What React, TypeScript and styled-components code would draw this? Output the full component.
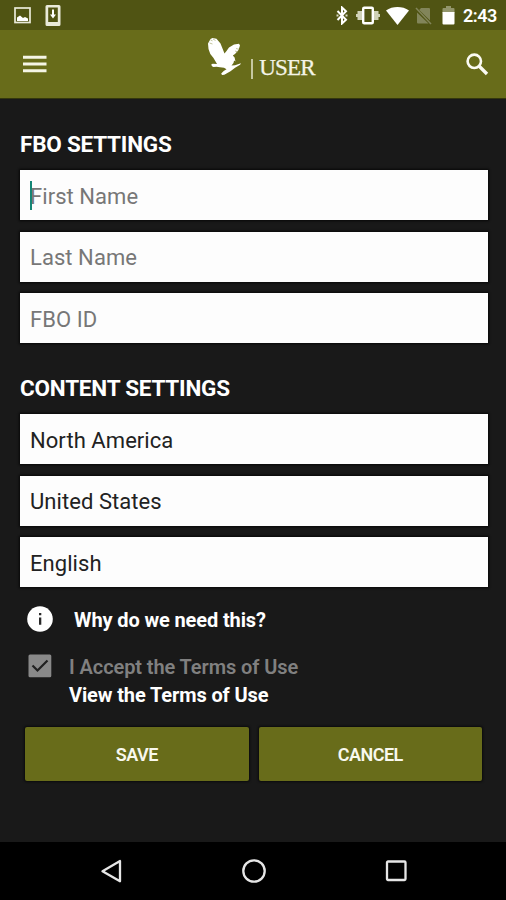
import React from "react";
import styled, { createGlobalStyle } from "styled-components";

const GlobalStyle = createGlobalStyle`
  * { box-sizing: border-box; }
  body { margin: 0; background: #191919; }
`;

const Screen = styled.div`
  width: 506px;
  height: 900px;
  display: flex;
  flex-direction: column;
  overflow: hidden;
  background: #191919;
  color: #fff;
  font-family: Roboto, sans-serif;
`;

const StatusBar = styled.div`
  height: 30px;
  flex: none;
  display: flex;
  justify-content: space-between;
  align-items: center;
  padding: 1px 9px 0 14px;
  background: #505413;
`;

const StatusGroup = styled.div<{ $gap: number }>`
  display: flex;
  align-items: center;
  gap: ${(p) => p.$gap}px;
  svg { display: block; }
`;

const Clock = styled.span`
  width: 34px;
  font-size: 18px;
  font-weight: 600;
  line-height: 28px;
  letter-spacing: -0.5px;
  margin-left: 2px;
`;

const AppBar = styled.header`
  height: 69px;
  flex: none;
  display: flex;
  align-items: flex-start;
  justify-content: space-between;
  padding: 0 17px 0 23px;
  background: #686c1a;
  border-bottom: 1px solid #34370d;
`;

const IconButton = styled.button<{ $top: number }>`
  display: block;
  margin: ${(p) => p.$top}px 0 0;
  padding: 0;
  border: 0;
  background: none;
  svg { display: block; }
`;

const Brand = styled.div`
  display: flex;
  align-items: flex-start;
  padding: 6px 0 0 10px;
  svg { display: block; }
`;

const BrandName = styled.span`
  display: flex;
  align-items: center;
  gap: 6px;
  margin: 19px 0 0 7px;
  color: #f4f4e8;
  font: 23px/26px "Liberation Serif", serif;
  letter-spacing: -0.85px;
  -webkit-text-stroke: 0.25px #f4f4e8;
`;

const Divider = styled.span`
  width: 2px;
  height: 20px;
  margin-top: 2px;
  background: #c6c8a0;
`;

const Content = styled.main`
  flex: 1;
  padding: 32px 18px 0 20px;
`;

const SectionTitle = styled.h2<{ $top?: number }>`
  margin: ${(p) => p.$top ?? 0}px 0 12px;
  font-size: 22.5px;
  font-weight: 700;
  line-height: 27px;
  letter-spacing: -0.22px;
`;

const FieldStack = styled.div`
  display: grid;
  grid-auto-rows: 50px;
  gap: 11.5px;
`;

const Field = styled.div<{ $hint?: boolean }>`
  display: flex;
  align-items: center;
  position: relative;
  padding: 2px 10px 0;
  background: #fdfdfd;
  box-shadow: 0 0 2px 1px #080808;
  color: ${(p) => (p.$hint ? "#777" : "#222")};
  font-size: 22px;
  letter-spacing: 0.06px;
`;

const Caret = styled.span`
  position: absolute;
  left: 10px;
  top: 11px;
  width: 2px;
  height: 29px;
  background: #148675;
`;

const InfoRow = styled.div`
  display: flex;
  align-items: center;
  gap: 20px;
  height: 28px;
  margin-top: 19px;
  padding-left: 6px;
  svg { display: block; }
`;

const TermsRow = styled.div`
  display: flex;
  align-items: flex-start;
  gap: 17px;
  margin-top: 19px;
  padding-left: 8px;
  svg { display: block; margin-top: 1px; }
`;

const TermsText = styled.div`
  display: flex;
  flex-direction: column;
`;

const Label = styled.span<{ $muted?: boolean }>`
  color: ${(p) => (p.$muted ? "#808080" : "#fff")};
  font-size: 20px;
  font-weight: ${(p) => (p.$muted ? 600 : 700)};
  line-height: 28px;
  letter-spacing: ${(p) => (p.$muted ? -0.09 : -0.12)}px;
  white-space: nowrap;
`;

const Actions = styled.div`
  display: grid;
  grid-template-columns: 1fr 1fr;
  gap: 10px;
  margin-top: 18px;
  padding: 0 6px 0 5px;
`;

const ActionButton = styled.button`
  height: 54px;
  padding: 1px 0 0;
  border: 0;
  border-radius: 2px;
  background: #686c1a;
  box-shadow: 0 0 2px 1px #0b0b0d;
  color: #f8f8ee;
  font: 600 18px/22px Roboto, sans-serif;
  letter-spacing: -0.5px;
`;

const NavBar = styled.nav`
  height: 58px;
  flex: none;
  display: flex;
  align-items: center;
  justify-content: space-between;
  padding: 0 98px 0 99px;
  background: #000;
  svg { display: block; }
`;

const PictureIcon = () => (
  <svg width="17" height="17" viewBox="0 0 17 17">
    <rect x="1" y="1" width="15" height="14.5" fill="none" stroke="#e9ead9" strokeWidth="1.7" />
    <path d="M3 14v-3.500l3-2 3 2.500 2-1 3 1.500V14z" fill="#fff" />
  </svg>
);

const DownloadIcon = () => (
  <svg width="16" height="21" viewBox="0 0 16 21">
    <path fillRule="evenodd" d="M2 0h12q1.500 0 1.500 1.500v18q0 1.500-1.500 1.500H2q-1.500 0-1.500-1.500v-18Q.5 0 2 0zM3.200 2.500V17h9.600V2.500z" fill="#e9ead9" />
    <path d="M7 4.500h2v5h2L8 13.500 5 9.500h2z" fill="#fff" />
  </svg>
);

const BluetoothIcon = () => (
  <svg width="15" height="19" viewBox="0 0 15 19">
    <path d="M2.500 5l8.500 8.800-4 3.700V1.500l4 3.700L2.500 14" fill="none" stroke="#fff" strokeWidth="2" />
    <path d="M1.500 8.500h2v2h-2zM10.500 8.500h2v2h-2z" fill="#d9dac6" />
  </svg>
);

const VibrateIcon = () => (
  <svg width="24" height="19" viewBox="0 0 24 19">
    <path d="M0 8h1.500V5H6v9H1.500v-3H0zM24 8h-1.500V5H18v9h4.500v-3H24z" fill="#d0d2b8" />
    <rect x="7.200" y="1.700" width="9.600" height="15.600" rx="1" fill="none" stroke="#fff" strokeWidth="2.400" />
  </svg>
);

const WifiIcon = () => (
  <svg width="23" height="18" viewBox="0 0 23 18">
    <path d="M0 3.500C6.500-1.100 16.500-1.100 23 3.500L11.500 18z" fill="#fff" />
  </svg>
);

const NoSimIcon = () => (
  <svg width="21" height="18" viewBox="0 0 21 18">
    <path d="M6 1h8q1 0 1 1v11.500L4.200 3zM2 5.500L13.500 16.500H3q-1 0-1-1z" fill="#82855a" />
    <path d="M1 1l15 16" stroke="#82855a" strokeWidth="1.500" />
  </svg>
);

const BatteryIcon = () => (
  <svg width="13" height="19" viewBox="0 0 13 19">
    <path d="M1.500 2H4V0h5v2h2.500q1 0 1 1v4H.5V3q0-1 1-1z" fill="#92956b" />
    <path d="M.5 6h12v11.500q0 1-1 1h-10q-1 0-1-1z" fill="#fff" />
  </svg>
);

const MenuIcon = () => (
  <svg width="24" height="19" viewBox="0 0 24 19">
    <path d="M0 2.200h23.500M0 9h23.500M0 15.800h23.500" stroke="#f5f5e5" strokeWidth="3" />
  </svg>
);

const SearchIcon = () => (
  <svg width="23" height="23" viewBox="0 0 23 23">
    <circle cx="8.300" cy="8.300" r="6.700" fill="none" stroke="#fbfbf3" strokeWidth="2.600" />
    <path d="M13 13l8 8" stroke="#fbfbf3" strokeWidth="3.400" />
  </svg>
);

const EagleLogo = () => (
  <svg width="36" height="42" viewBox="0 0 36 42">
    <path
      d="M2.500 3L4.500 2l4 .8L12.500 7.500l1.800 4.500L16.500 17.500l2-2.500 2.500-3.500 5-3 5-.8 1 1.800L30.500 14 27 18l-2.200 1.500 1.800 2 .9 4-1.400-1-.6 2.500-2 2.500 3.500-.3 6-2-.9 1.600-5 3-4.600 3.500-6.200 3.500-2.300.3-.8-1.500 2.500-2.500 2.800-1.800-2.500-1.500-4-.6-3.500-.4-3 .2-1.500-.7-.8-1.800 1.500-.7 4.300.1L5.500 22l-3.200-4L.5 13 0 7.500z"
      fill="#fff"
    />
    <path d="M2.500 4l2 .8M5 3l2.500 1.500M1.500 7l3 1M28 12.500l3 .8M27 15l2.500.8" stroke="#b4b787" strokeWidth=".8" />
  </svg>
);

const InfoIcon = () => (
  <svg width="28" height="28" viewBox="0 0 28 28">
    <circle cx="14" cy="13" r="12.800" fill="#fff" />
    <path d="M13 7h2.300v2.300H13zM13 11.500h2.300v7.200H13z" fill="#292929" />
  </svg>
);

const CheckedBox = () => (
  <svg width="24" height="24" viewBox="0 0 24 24">
    <rect x=".5" y=".5" width="22.800" height="22.800" rx="1.500" fill="#898989" />
    <path d="M4.500 11.500l5 5L19.500 6.500" fill="none" stroke="#202020" strokeWidth="2.200" />
  </svg>
);

const BackIcon = () => (
  <svg width="24" height="26" viewBox="0 0 24 26">
    <path d="M21 3v20.300L3.500 13.200z" fill="none" stroke="#e6e6e6" strokeWidth="2.300" strokeLinejoin="round" />
  </svg>
);

const HomeIcon = () => (
  <svg width="26" height="26" viewBox="0 0 26 26">
    <circle cx="13" cy="13" r="10.700" fill="none" stroke="#e6e6e6" strokeWidth="2.300" />
  </svg>
);

const RecentsIcon = () => (
  <svg width="24" height="24" viewBox="0 0 24 24">
    <rect x="3" y="2.500" width="18.500" height="18.500" rx="1" fill="none" stroke="#e6e6e6" strokeWidth="2.300" />
  </svg>
);

export default function App() {
  return (
    <>
      <GlobalStyle />
      <Screen>
        <StatusBar>
          <StatusGroup $gap={14}>
            <PictureIcon />
            <DownloadIcon />
          </StatusGroup>
          <StatusGroup $gap={6}>
            <BluetoothIcon />
            <VibrateIcon />
            <WifiIcon />
            <NoSimIcon />
            <BatteryIcon />
            <Clock>2:43</Clock>
          </StatusGroup>
        </StatusBar>
        <AppBar>
          <IconButton $top={25} aria-label="Menu"><MenuIcon /></IconButton>
          <Brand>
            <EagleLogo />
            <BrandName><Divider />USER</BrandName>
          </Brand>
          <IconButton $top={23} aria-label="Search"><SearchIcon /></IconButton>
        </AppBar>
        <Content>
          <SectionTitle>FBO SETTINGS</SectionTitle>
          <FieldStack>
            <Field $hint>First Name<Caret /></Field>
            <Field $hint>Last Name</Field>
            <Field $hint>FBO ID</Field>
          </FieldStack>
          <SectionTitle $top={32}>CONTENT SETTINGS</SectionTitle>
          <FieldStack>
            <Field>North America</Field>
            <Field>United States</Field>
            <Field>English</Field>
          </FieldStack>
          <InfoRow>
            <InfoIcon />
            <Label>Why do we need this?</Label>
          </InfoRow>
          <TermsRow>
            <CheckedBox />
            <TermsText>
              <Label $muted>I Accept the Terms of Use</Label>
              <Label>View the Terms of Use</Label>
            </TermsText>
          </TermsRow>
          <Actions>
            <ActionButton>SAVE</ActionButton>
            <ActionButton>CANCEL</ActionButton>
          </Actions>
        </Content>
        <NavBar>
          <BackIcon />
          <HomeIcon />
          <RecentsIcon />
        </NavBar>
      </Screen>
    </>
  );
}
